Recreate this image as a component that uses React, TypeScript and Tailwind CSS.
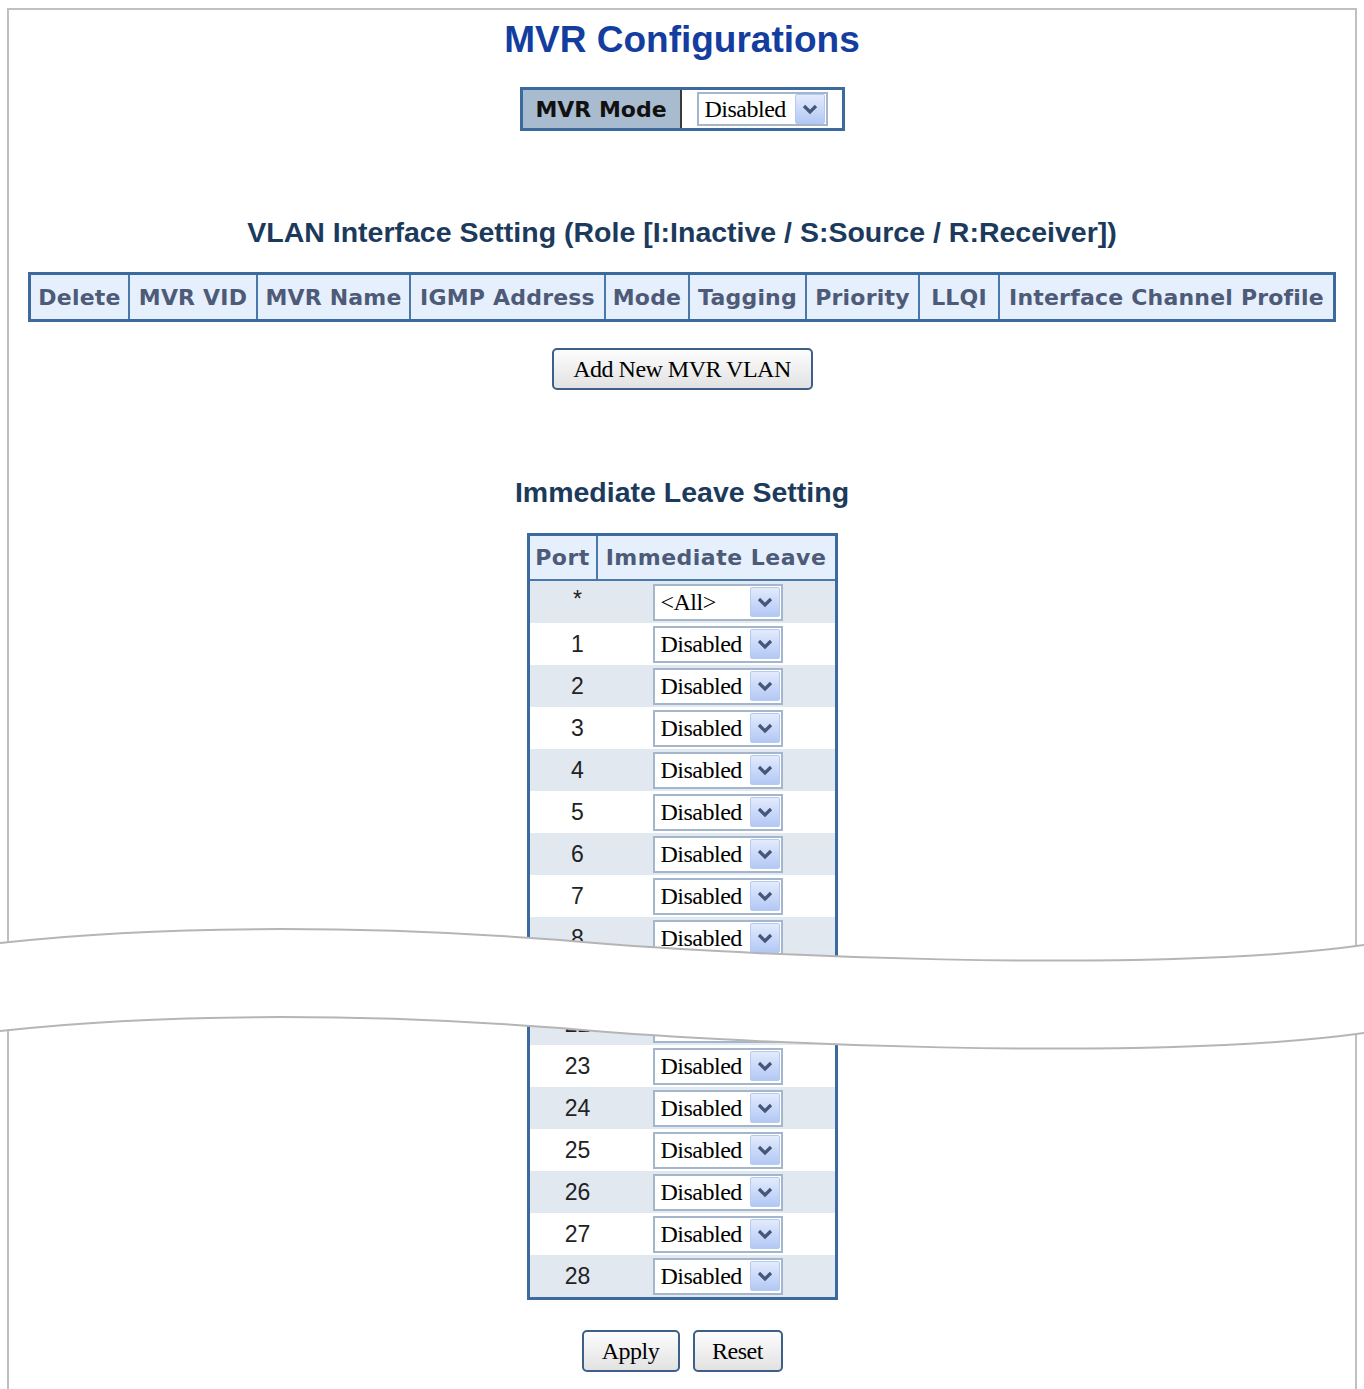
import React from 'react';

const serif = "font-['Liberation_Serif',serif] tracking-[-0.5px] text-black";
const headFont = "font-['DejaVu_Sans',sans-serif] font-bold";

const vlanColumns = [
  { label: 'Delete', width: 'w-[97px]' },
  { label: 'MVR VID', width: 'w-[126px]' },
  { label: 'MVR Name', width: 'w-[151px]' },
  { label: 'IGMP Address', width: 'w-[193px]' },
  { label: 'Mode', width: 'w-[82px]' },
  { label: 'Tagging', width: 'w-[115px]' },
  { label: 'Priority', width: 'w-[111px]' },
  { label: 'LLQI', width: 'w-[78px]' },
  { label: 'Interface Channel Profile', width: 'w-[333px]' },
];

const topPorts = ['*', '1', '2', '3', '4', '5', '6', '7', '8', '9'];
const bottomPorts = ['22', '23', '24', '25', '26', '27', '28'];

function Arrow() {
  return (
    <div className="flex h-[30px] w-[30px] items-center justify-center rounded-[2px] border border-[#b6c9ef] bg-linear-to-b from-[#e3ebfd] to-[#b3c8f4]">
      <svg width="18" height="14" viewBox="0 0 18 14">
        <path d="M3 4 L9 10 L15 4" fill="none" stroke="#45567a" strokeWidth="3.2" />
      </svg>
    </div>
  );
}

function Select({ value, className }: { value: string; className: string }) {
  return (
    <div className={`flex items-center justify-between border-2 border-[#a3b6cc] bg-white pl-[6px] pr-[1px] ${className}`}>
      <span className={`${serif} text-[24px] leading-none`}>{value}</span>
      <Arrow />
    </div>
  );
}

function Button({ label, className }: { label: string; className: string }) {
  return (
    <button className={`flex h-[42px] items-center justify-center rounded-[5px] border-2 border-[#3d5f88] bg-linear-to-b from-[#fdfdfd] to-[#e2e2e2] ${serif} text-[24px] leading-none ${className}`}>
      {label}
    </button>
  );
}

function PortRow({ port, index, tall }: { port: string; index: number; tall?: boolean }) {
  const shaded = index % 2 === 0;
  return (
    <div className={`flex items-center ${tall ? 'h-[44px]' : 'h-[42px]'} ${shaded ? 'bg-[#e1e8f0]' : 'bg-white'}`}>
      <div className="w-[96px] text-center font-['Liberation_Sans',sans-serif] text-[23px] leading-none text-[#222]">
        {port === '*' ? <span className="relative top-[-3px]">*</span> : port}
      </div>
      <Select value={port === '*' ? '<All>' : 'Disabled'} className="ml-[27px] h-[37px] w-[130px]" />
    </div>
  );
}

export default function App() {
  return (
    <div className="relative h-[1389px] w-[1364px] overflow-hidden bg-white pl-[7px] pt-[8px]">
      <div className="flex h-[1381px] w-[1350px] flex-col items-center border-x-2 border-t-2 border-[#c0c0c0]">
        <h1 className="mt-[10px] font-['Liberation_Sans',sans-serif] text-[37px] font-bold leading-[40px] text-[#133d9e]">
          MVR Configurations
        </h1>

        <div className="mt-[27px] flex h-[44px] w-[325px] border-[3px] border-[#3c6a9e]">
          <div className={`flex w-[157px] items-center justify-center bg-[#a9bccf] ${headFont} text-[22px] text-[#111]`}>
            MVR Mode
          </div>
          <div className="w-[2px] bg-[#3a3a3a]" />
          <div className="flex flex-1 items-center bg-white pl-[15px]">
            <Select value="Disabled" className="h-[34px] w-[131px]" />
          </div>
        </div>

        <h2 className="mt-[85px] font-['Liberation_Sans',sans-serif] text-[28.5px] font-bold leading-[32px] text-[#1b3a5c]">
          VLAN Interface Setting (Role [I:Inactive / S:Source / R:Receiver])
        </h2>

        <div className="mt-[24px] flex h-[50px] w-[1308px] border-[3px] border-[#3c6a9e] bg-[#e6f0fc]">
          {vlanColumns.map((col, i) => (
            <div
              key={col.label}
              className={`flex items-center justify-center ${col.width} ${i > 0 ? 'ml-[2px] shadow-[-2px_0_0_#4a78a8]' : ''} ${headFont} text-[22px] tracking-[0.2px] text-[#4d5a78]`}
            >
              {col.label}
            </div>
          ))}
        </div>

        <Button label="Add New MVR VLAN" className="mt-[26px] w-[261px]" />

        <h2 className="mt-[86px] font-['Liberation_Sans',sans-serif] text-[28.5px] font-bold leading-[32px] text-[#1b3a5c]">
          Immediate Leave Setting
        </h2>

        <div className="mt-[25px] w-[311px] border-[3px] border-[#3c6a9e]">
          <div className={`flex h-[45px] border-b-2 border-[#4a78a8] bg-[#e6f0fc] ${headFont} text-[22px] tracking-[0.5px] text-[#4d5a78]`}>
            <div className="flex w-[68px] items-center justify-center border-r-2 border-[#4a78a8]">Port</div>
            <div className="flex flex-1 items-center justify-center">Immediate Leave</div>
          </div>
          {topPorts.map((p, i) => (
            <PortRow key={p} port={p} index={i} tall={p === '9'} />
          ))}
          {bottomPorts.map((p) => (
            <PortRow key={p} port={p} index={Number(p)} />
          ))}
        </div>

        <div className="mt-[30px] flex gap-[13px]">
          <Button label="Apply" className="w-[98px]" />
          <Button label="Reset" className="w-[90px]" />
        </div>
      </div>

      <svg
        className="pointer-events-none absolute left-0 top-0"
        width="1364"
        height="1389"
        viewBox="0 0 1364 1389"
      >
        <path
          d="M0 943 C150 926 350 924 560 940 C720 955 1150 975 1364 945 L1364 1033 C1150 1063 720 1043 560 1028 C350 1012 150 1014 0 1031 Z"
          fill="#ffffff"
        />
        <path d="M0 943 C150 926 350 924 560 940 C720 955 1150 975 1364 945" fill="none" stroke="#b5b5b5" strokeWidth="2" />
        <path d="M0 1031 C150 1014 350 1012 560 1028 C720 1043 1150 1063 1364 1033" fill="none" stroke="#b5b5b5" strokeWidth="2" />
      </svg>
    </div>
  );
}
